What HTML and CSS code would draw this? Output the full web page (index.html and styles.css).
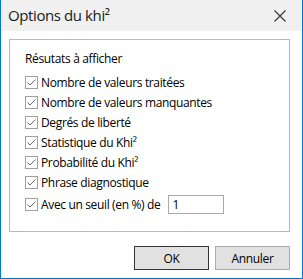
FILE: index.html
```html
<!DOCTYPE html>
<html lang="fr">
<head>
    <meta charset="UTF-8">
    <title>Options du khi²</title>
    <link rel="stylesheet" href="styles.css">
</head>
<body>
    <div class="fenetre">
        <div class="titre">
            <span class="titre-texte">Options du khi²</span>
            <svg class="fermer" width="12" height="12" viewBox="0 0 12 12">
                <path d="M0.5 0.5 L11.5 11.5 M11.5 0.5 L0.5 11.5" stroke="#333" stroke-width="1.1" fill="none"/>
            </svg>
        </div>
        <div class="contenu">
            <div class="groupe">
                <div class="legende">Résutats à afficher</div>
                <label class="ligne"><span class="case"><svg width="11" height="11" viewBox="0 0 11 11"><path d="M1.5 5.5 L4 8 L9.5 2.5" stroke="#6b6b6b" stroke-width="1" fill="none"/></svg></span>Nombre de valeurs traitées</label>
                <label class="ligne"><span class="case"><svg width="11" height="11" viewBox="0 0 11 11"><path d="M1.5 5.5 L4 8 L9.5 2.5" stroke="#6b6b6b" stroke-width="1" fill="none"/></svg></span>Nombre de valeurs manquantes</label>
                <label class="ligne"><span class="case"><svg width="11" height="11" viewBox="0 0 11 11"><path d="M1.5 5.5 L4 8 L9.5 2.5" stroke="#6b6b6b" stroke-width="1" fill="none"/></svg></span>Degrés de liberté</label>
                <label class="ligne"><span class="case"><svg width="11" height="11" viewBox="0 0 11 11"><path d="M1.5 5.5 L4 8 L9.5 2.5" stroke="#6b6b6b" stroke-width="1" fill="none"/></svg></span>Statistique du Khi²</label>
                <label class="ligne"><span class="case"><svg width="11" height="11" viewBox="0 0 11 11"><path d="M1.5 5.5 L4 8 L9.5 2.5" stroke="#6b6b6b" stroke-width="1" fill="none"/></svg></span>Probabilité du Khi²</label>
                <label class="ligne"><span class="case"><svg width="11" height="11" viewBox="0 0 11 11"><path d="M1.5 5.5 L4 8 L9.5 2.5" stroke="#6b6b6b" stroke-width="1" fill="none"/></svg></span>Phrase diagnostique</label>
                <label class="ligne seuil"><span class="case"><svg width="11" height="11" viewBox="0 0 11 11"><path d="M1.5 5.5 L4 8 L9.5 2.5" stroke="#6b6b6b" stroke-width="1" fill="none"/></svg></span>Avec un seuil (en %) de <input class="champ" type="text" value="1"></label>
            </div>
            <div class="boutons">
                <button class="bouton defaut">OK</button>
                <button class="bouton">Annuler</button>
            </div>
        </div>
    </div>
</body>
</html>
```

FILE: styles.css
```css
body {
    margin: 0;
    font-family: "Open Sans", "Noto Sans", sans-serif;
    font-size: 12px;
    letter-spacing: -0.35px;
    color: #000;
}
.fenetre {
    width: 303px;
    height: 279px;
    box-sizing: border-box;
    border: 1px solid #0078d7;
    border-top: none;
    background: #fff;
    display: flex;
    flex-direction: column;
}
.titre {
    height: 31px;
    background: #f0f0f0;
    display: flex;
    align-items: center;
    justify-content: space-between;
    padding: 0 16px 0 7px;
    flex-shrink: 0;
}
.titre-texte {
    font-size: 15px;
    letter-spacing: -0.4px;
    color: #1a1a1a;
    margin-top: -1px;
}
.fermer {
    margin-top: 1px;
}
.contenu {
    padding: 8px 12px 0 8px;
}
.groupe {
    border: 1px solid #b9b9b9;
    padding: 11px 0 0 15px;
    box-sizing: border-box;
    height: 193px;
}
.legende {
    height: 16px;
    line-height: 16px;
    margin-bottom: 5px;
}
.ligne {
    display: flex;
    align-items: center;
    height: 20px;
}
.case {
    width: 13px;
    height: 13px;
    box-sizing: border-box;
    border: 1px solid #a0a0a0;
    background: #fff;
    margin-right: 3px;
    display: flex;
    align-items: center;
    justify-content: center;
}
.seuil {
    height: 22px;
    margin-top: 1px;
}
.champ {
    width: 56px;
    height: 19px;
    box-sizing: border-box;
    border: 1px solid #a9a9a9;
    margin: 0 0 0 8px;
    padding: 0 3px;
    font-family: inherit;
    font-size: 12px;
    letter-spacing: inherit;
}
.boutons {
    display: flex;
    justify-content: flex-end;
    gap: 6px;
    margin-top: 14px;
}
.bouton {
    width: 75px;
    height: 24px;
    background: #e1e1e1;
    border: 1px solid #adadad;
    font-family: inherit;
    font-size: 12px;
    letter-spacing: inherit;
    color: #000;
    padding: 0;
}
.bouton.defaut {
    border-color: #333;
}
```
